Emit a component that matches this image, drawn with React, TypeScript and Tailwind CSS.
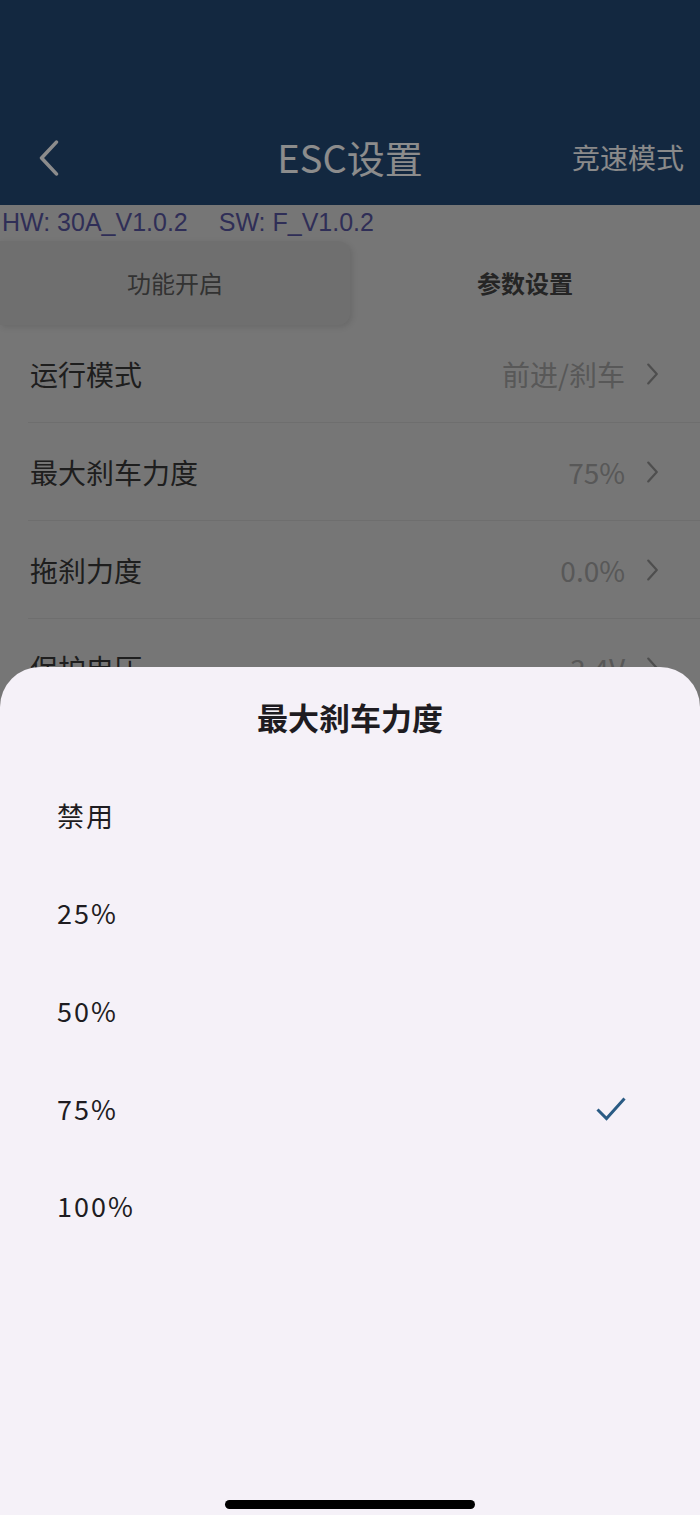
import React from 'react';

const rows = [
  { label: '运行模式', value: '前进/刹车' },
  { label: '最大刹车力度', value: '75%' },
  { label: '拖刹力度', value: '0.0%' },
  { label: '保护电压', value: '3.4V' },
];

const options = ['禁用', '25%', '50%', '75%', '100%'];

const Chevron: React.FC<{ className?: string }> = ({ className }) => (
  <svg viewBox="0 0 16 28" className={className} fill="none" stroke="currentColor" strokeWidth={2.6} strokeLinecap="round" strokeLinejoin="round">
    <path d="M3 3l10 11-10 11" />
  </svg>
);

export default function App() {
  const selected = '75%';
  return (
    <div className="relative w-[700px] h-[1515px] overflow-hidden bg-[#d7d7d7] font-['Noto_Sans_CJK_SC','Noto_Sans',sans-serif]">
      {/* header */}
      <div className="h-[205px] bg-[#244976] pt-[110px]">
        <div className="relative h-[94px] flex items-center justify-center">
          <svg viewBox="0 0 20 34" className="absolute left-[38px] top-[30px] w-[22px] h-[36px] text-white" fill="none" stroke="currentColor" strokeWidth={3.4} strokeLinecap="round" strokeLinejoin="round">
            <path d="M17 2L3 17l14 15" />
          </svg>
          <span className="text-[38px] text-white leading-none">ESC设置</span>
          <span className="absolute right-[16px] text-[28px] text-[#fbfbfb] leading-none">竞速模式</span>
        </div>
      </div>

      {/* version line */}
      <div className="h-[36px] flex items-center pl-[2px] gap-[31px] text-[25px] text-[#57559e] font-['Liberation_Sans','Noto_Sans_CJK_SC',sans-serif]">
        <span>HW: 30A_V1.0.2</span>
        <span>SW: F_V1.0.2</span>
      </div>

      {/* tabs */}
      <div className="h-[84px] flex">
        <div className="w-[350px] h-full flex items-center justify-center rounded-r-[12px] bg-[#cbcbcb] shadow-[2px_2px_6px_rgba(0,0,0,0.12)] text-[24px] text-[#5c5c5c]">
          功能开启
        </div>
        <div className="flex-1 flex items-center justify-center text-[24px] font-bold text-[#444444]">
          参数设置
        </div>
      </div>

      {/* rows */}
      <div>
        {rows.map((r) => (
          <div key={r.label} className="ml-[28px] h-[98px] flex items-center border-b border-[#c8c8c8]">
            <span className="pl-[2px] text-[28px] text-[#373737]">{r.label}</span>
            <span className="ml-auto text-[28px] text-[#a0a0a0]">{r.value}</span>
            <Chevron className="ml-[20px] mr-[40px] w-[15px] h-[24px] text-[#8f8f8f]" />
          </div>
        ))}
      </div>

      {/* dim overlay */}
      <div className="absolute inset-0 bg-black/45" />

      {/* bottom sheet */}
      <div className="absolute left-0 right-0 top-[667px] bottom-0 rounded-t-[40px] bg-[#f5f1f8]">
        <div className="h-[100px] flex items-center justify-center text-[31px] font-bold text-[#1e1c21]">
          最大刹车力度
        </div>
        {options.map((o) => (
          <div key={o} className="h-[97.7px] flex items-center pl-[57px] pr-[74px]">
            <span className="text-[27px] text-[#1e1c21] tracking-[2px]">{o}</span>
            {o === selected && (
              <svg viewBox="0 0 30 24" className="ml-auto w-[30px] h-[24px]" fill="none" stroke="#2a5b84" strokeWidth={3}>
                <path d="M1.5 12.5l9 9 18-20" />
              </svg>
            )}
          </div>
        ))}
        <div className="absolute left-[225px] bottom-[6px] w-[250px] h-[9px] rounded-full bg-black" />
      </div>
    </div>
  );
}
